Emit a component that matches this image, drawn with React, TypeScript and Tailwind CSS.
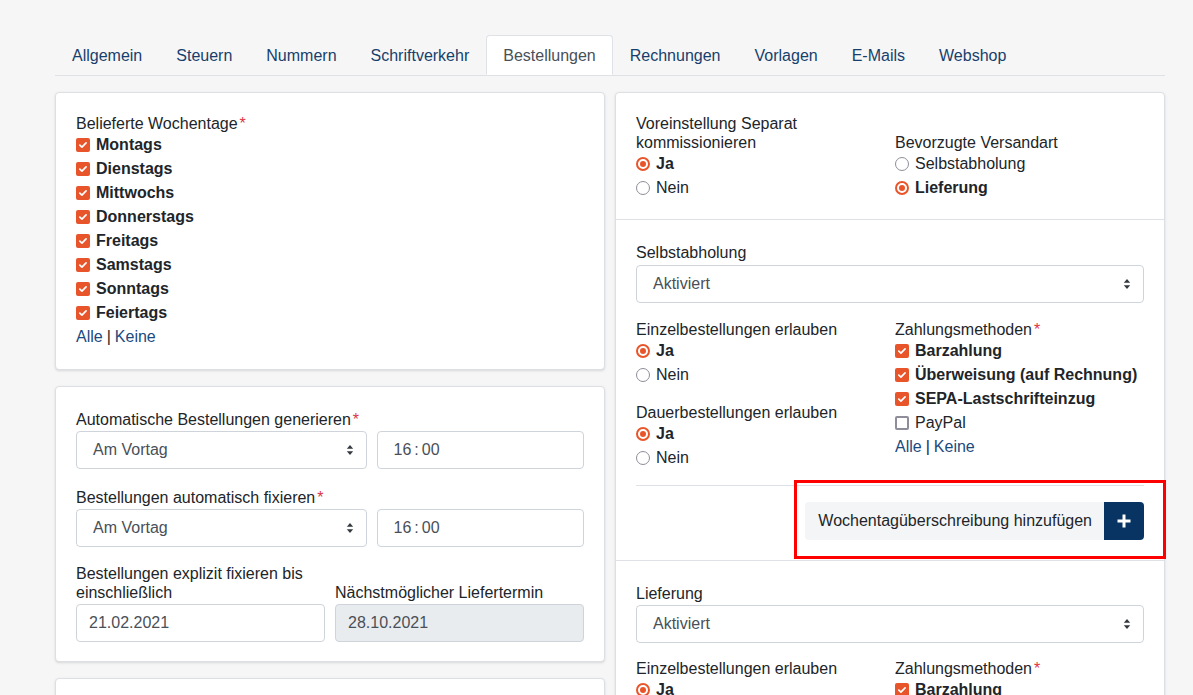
import React from "react";

const tabs = [
  "Allgemein",
  "Steuern",
  "Nummern",
  "Schriftverkehr",
  "Bestellungen",
  "Rechnungen",
  "Vorlagen",
  "E-Mails",
  "Webshop",
];

const days = [
  "Montags",
  "Dienstags",
  "Mittwochs",
  "Donnerstags",
  "Freitags",
  "Samstags",
  "Sonntags",
  "Feiertags",
];

function Check({ label, checked }: { label: string; checked: boolean }) {
  return (
    <div className="flex h-6 items-center">
      {checked ? (
        <span className="flex h-[14px] w-[14px] flex-none items-center justify-center rounded-[2px] bg-[#e8552a]">
          <svg viewBox="0 0 12 12" className="h-[10px] w-[10px]">
            <path
              d="M2.2 6.2l2.5 2.4 5-5.2"
              fill="none"
              stroke="#fff"
              strokeWidth="2"
              strokeLinecap="round"
              strokeLinejoin="round"
            />
          </svg>
        </span>
      ) : (
        <span className="h-[14px] w-[14px] flex-none rounded-[2px] border-2 border-[#8e8e9a] bg-white" />
      )}
      <span className={checked ? "ml-1.5 font-bold" : "ml-1.5"}>{label}</span>
    </div>
  );
}

function Radio({ label, checked }: { label: string; checked: boolean }) {
  return (
    <div className="flex h-6 items-center">
      {checked ? (
        <span className="flex h-[14px] w-[14px] flex-none items-center justify-center rounded-full border-2 border-[#e8552a] bg-white">
          <span className="h-[6px] w-[6px] rounded-full bg-[#e8552a]" />
        </span>
      ) : (
        <span className="h-[14px] w-[14px] flex-none rounded-full border-[1.5px] border-[#8e8e9a] bg-white" />
      )}
      <span className={checked ? "ml-1.5 font-bold" : "ml-1.5"}>{label}</span>
    </div>
  );
}

function Label({ children, required }: { children: React.ReactNode; required?: boolean }) {
  return (
    <div className="leading-[19px]">
      {children}
      {required && <span className="ml-0.5 text-[#dc3545]">*</span>}
    </div>
  );
}

function Select({ value }: { value: string }) {
  return (
    <div className="flex h-[38px] items-center justify-between rounded border border-[#ced4da] bg-white pl-4 pr-3 text-[#495057]">
      <span>{value}</span>
      <svg viewBox="0 0 8 12" className="h-3 w-2">
        <path d="M4 1l3.2 3.8H0.8z M4 11L0.8 7.2h6.4z" fill="#343a40" />
      </svg>
    </div>
  );
}

function TimeInput() {
  return (
    <div className="flex h-[38px] items-center rounded border border-[#ced4da] bg-white px-4 text-[#495057]">
      16<span className="mx-[3px]">:</span>00
    </div>
  );
}

function Input({ value, disabled }: { value: string; disabled?: boolean }) {
  return (
    <div
      className={
        disabled
          ? "mt-[2px] flex h-[38px] items-center rounded border border-[#ced4da] bg-[#e9ecef] px-3 text-[#495057]"
          : "mt-[2px] flex h-[38px] items-center rounded border border-[#ced4da] bg-white px-3 text-[#495057]"
      }
    >
      {value}
    </div>
  );
}

function Links() {
  return (
    <div className="flex h-6 items-center">
      <span className="text-[#1b4a7e]">Alle</span>
      <span className="mx-1">|</span>
      <span className="text-[#1b4a7e]">Keine</span>
    </div>
  );
}

function DeliveryBlock({ title, compact }: { title: string; compact?: boolean }) {
  return (
    <>
      <Label>{title}</Label>
      <div className={compact ? "mt-[2px]" : "mt-[3px]"}>
        <Select value="Aktiviert" />
      </div>
      <div className={compact ? "mt-4 grid grid-cols-2 gap-x-[10px]" : "mt-[17px] grid grid-cols-2 gap-x-[10px]"}>
        <div>
          <Label>Einzelbestellungen erlauben</Label>
          <Radio label="Ja" checked />
          <Radio label="Nein" checked={false} />
          <div className="mt-4">
            <Label>Dauerbestellungen erlauben</Label>
            <Radio label="Ja" checked />
            <Radio label="Nein" checked={false} />
          </div>
        </div>
        <div>
          <Label required>Zahlungsmethoden</Label>
          <Check label="Barzahlung" checked />
          <Check label="Überweisung (auf Rechnung)" checked />
          <Check label="SEPA-Lastschrifteinzug" checked />
          <Check label="PayPal" checked={false} />
          <Links />
        </div>
      </div>
    </>
  );
}

export default function App() {
  return (
    <div className="relative min-h-[695px] bg-[#f6f6f6] pt-[35px] font-['Liberation_Sans',Arial,sans-serif] text-base text-[#212529]">
      <div className="ml-[55px] w-[1110px]">
        <div className="flex border-b border-[#dee2e6]">
          {tabs.map((t) =>
            t === "Bestellungen" ? (
              <div
                key={t}
                className="-mb-px flex h-10 items-center rounded-t border border-[#dee2e6] border-b-white bg-white px-4 pt-[2px] text-[#495057]"
              >
                {t}
              </div>
            ) : (
              <div key={t} className="flex h-10 items-center px-[17px] pt-[2px] text-[#163f6c]">
                {t}
              </div>
            ),
          )}
        </div>

        <div className="mt-4 grid grid-cols-2 items-start gap-x-[10px]">
          <div className="flex flex-col gap-4">
            <div className="rounded border border-[#dcdfe3] bg-white px-5 pb-5 pt-[21px] shadow-sm">
              <Label required>Belieferte Wochentage</Label>
              {days.map((d) => (
                <Check key={d} label={d} checked />
              ))}
              <Links />
            </div>

            <div className="rounded border border-[#dcdfe3] bg-white px-5 pb-[19px] pt-[23px] shadow-sm">
              <Label required>Automatische Bestellungen generieren</Label>
              <div className="mt-[2px] grid grid-cols-[7fr_5fr] gap-x-[10px]">
                <Select value="Am Vortag" />
                <TimeInput />
              </div>
              <div className="mt-[19px]">
                <Label required>Bestellungen automatisch fixieren</Label>
              </div>
              <div className="mt-[2px] grid grid-cols-[7fr_5fr] gap-x-[10px]">
                <Select value="Am Vortag" />
                <TimeInput />
              </div>
              <div className="mt-[17px] grid grid-cols-2 items-end gap-x-[10px]">
                <div>
                  <Label>
                    Bestellungen explizit fixieren bis
                    <br />
                    einschließlich
                  </Label>
                  <Input value="21.02.2021" />
                </div>
                <div>
                  <Label>Nächstmöglicher Liefertermin</Label>
                  <Input value="28.10.2021" disabled />
                </div>
              </div>
            </div>

            <div className="h-10 rounded border border-[#dcdfe3] bg-white shadow-sm" />
          </div>

          <div className="rounded border border-[#dcdfe3] bg-white shadow-sm">
            <div className="border-b border-[#dee2e6] px-5 pb-[19px] pt-[21px]">
              <div className="grid grid-cols-2 items-end gap-x-[10px]">
                <Label>
                  Voreinstellung Separat
                  <br />
                  kommissionieren
                </Label>
                <Label>Bevorzugte Versandart</Label>
                <div>
                  <Radio label="Ja" checked />
                  <Radio label="Nein" checked={false} />
                </div>
                <div>
                  <Radio label="Selbstabholung" checked={false} />
                  <Radio label="Lieferung" checked />
                </div>
              </div>
            </div>

            <div className="border-b border-[#dee2e6] px-5 pb-5 pt-[23px]">
              <DeliveryBlock title="Selbstabholung" />
              <div className="mt-[15px] border-t border-[#dee2e6]" />
              <div className="mt-4 flex justify-end">
                <div className="flex h-[38px] items-center rounded-l bg-[#f4f5f7] pl-[13px] pr-3">
                  Wochentagüberschreibung hinzufügen
                </div>
                <div className="flex h-[38px] w-10 items-center justify-center rounded-r bg-[#073463]">
                  <svg viewBox="0 0 16 16" className="h-4 w-4">
                    <path d="M8 1.5v13M1.5 8h13" stroke="#fff" strokeWidth="3" />
                  </svg>
                </div>
              </div>
            </div>

            <div className="px-5 pb-5 pt-[23px]">
              <DeliveryBlock title="Lieferung" compact />
            </div>
          </div>
        </div>
      </div>

      <div className="pointer-events-none absolute left-[794px] top-[480px] h-[79px] w-[372px] border-[3px] border-[#ff0000]" />
    </div>
  );
}
